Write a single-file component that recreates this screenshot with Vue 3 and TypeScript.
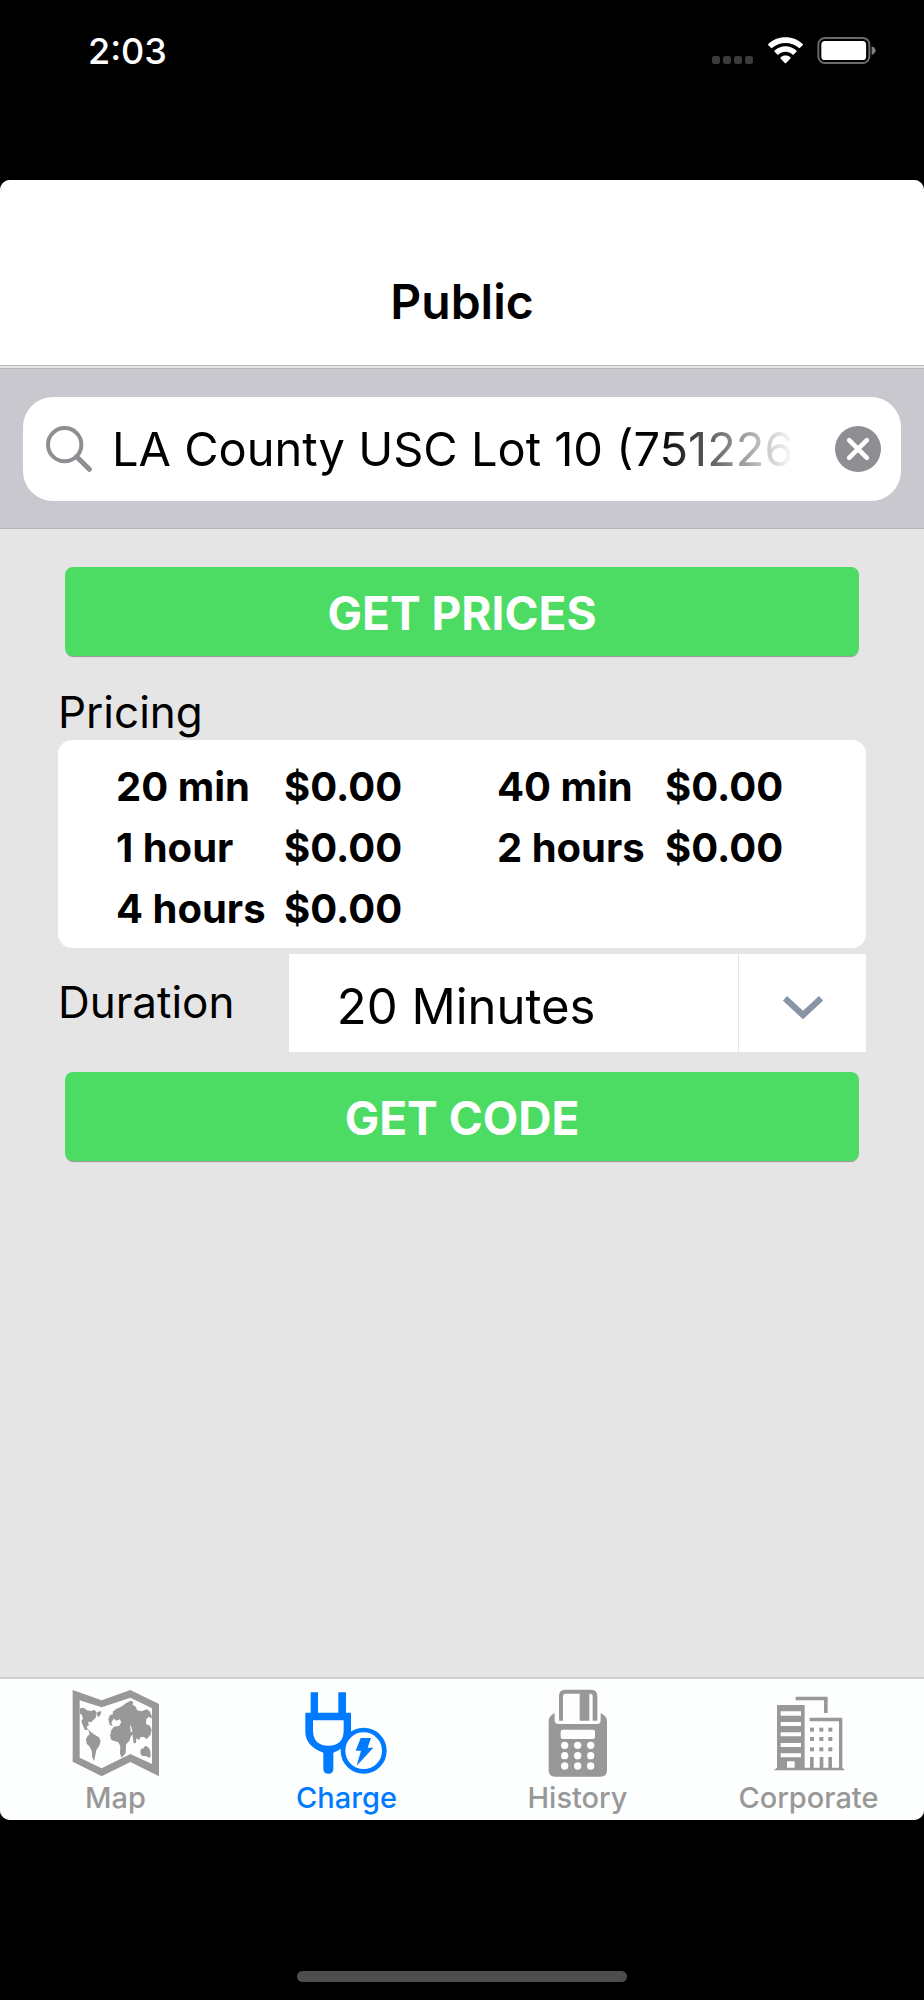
<script setup lang="ts">
import { ref } from 'vue'

type TabId = 'map' | 'charge' | 'history' | 'corporate'

interface Tab {
  id: TabId
  label: string
  viewBox: string
}

interface Price {
  span: string
  amount: string
}

const tabs: Tab[] = [
  { id: 'map', label: 'Map', viewBox: '-13 55 420 270' },
  { id: 'charge', label: 'Charge', viewBox: '-10 55 420 270' },
  { id: 'history', label: 'History', viewBox: '-7 55 420 270' },
  { id: 'corporate', label: 'Corporate', viewBox: '43 55 420 270' },
]

const priceRows: Price[][] = [
  [
    { span: '20 min', amount: '$0.00' },
    { span: '40 min', amount: '$0.00' },
  ],
  [
    { span: '1 hour', amount: '$0.00' },
    { span: '2 hours', amount: '$0.00' },
  ],
  [{ span: '4 hours', amount: '$0.00' }],
]

const durations: string[] = ['20 Minutes', '40 Minutes', '1 Hour', '2 Hours', '4 Hours']

const activeTab = ref<TabId>('charge')
const query = ref<string>('LA County USC Lot 10 (751226)')
const duration = ref<string>('20 Minutes')
</script>

<template>
  <div class="screen">
    <header class="status">
      <time class="clock">2:03</time>
      <div class="indicators">
        <svg class="signal" viewBox="0 0 42 8" aria-hidden="true">
          <rect v-for="n in 4" :key="n" :x="(n - 1) * 11" y="0" width="8" height="8" rx="2.5" />
        </svg>
        <svg class="wifi" viewBox="0 0 106 80" aria-hidden="true">
          <path d="M53 0C32 0 14 8 1 20Q-1 22 1 24L9 32Q11 34 13 32C24 22 38 17 53 17S82 22 93 32Q95 34 97 32L105 24Q107 22 105 20C92 8 74 0 53 0Z" />
          <path d="M53 27C40 27 29 32 20 40Q18 42 20 44L28 52Q30 54 32 52C38 47 45 44 53 44S68 47 74 52Q76 54 78 52L86 44Q88 42 86 40C77 32 66 27 53 27Z" />
          <path d="M53 55C47 55 42 57 38 61Q37 63 38 64L51 78Q53 80 55 78L68 64Q69 63 68 61C64 57 59 55 53 55Z" />
        </svg>
        <svg class="battery" viewBox="0 0 177 82" aria-hidden="true">
          <rect x="3" y="3" width="155" height="76" rx="20" fill="none" stroke="#6b6b6b" stroke-width="6" />
          <rect x="12" y="12" width="136" height="58" rx="11" fill="#fff" />
          <path d="M165 28C174 32 177 37 177 41S174 51 165 55Z" fill="#808080" />
        </svg>
      </div>
    </header>

    <div class="sheet">
      <div class="titlebar">
        <h1>Public</h1>
      </div>

      <form class="searchbar" role="search" @submit.prevent>
        <div class="field">
          <svg class="magnifier" viewBox="0 0 138 138" aria-hidden="true">
            <circle cx="56" cy="56" r="50" fill="none" stroke="#8e8e93" stroke-width="12" />
            <path d="M92 92L130 130" stroke="#8e8e93" stroke-width="15" stroke-linecap="round" />
          </svg>
          <input v-model="query" type="text" aria-label="Search locations" />
          <button type="button" class="clear" aria-label="Clear search" @click="query = ''">
            <svg viewBox="0 0 140 140" aria-hidden="true">
              <circle cx="70" cy="70" r="70" fill="#8e8e93" />
              <path d="M43 43L97 97M97 43L43 97" stroke="#fff" stroke-width="14" stroke-linecap="round" />
            </svg>
          </button>
        </div>
      </form>

      <main class="content">
        <button type="button" class="action">GET PRICES</button>

        <h2 id="pricing-title">Pricing</h2>
        <div class="card">
          <table aria-labelledby="pricing-title">
            <tbody>
              <tr v-for="(row, r) in priceRows" :key="r">
                <template v-for="price in row" :key="price.span">
                  <th scope="row">{{ price.span }}</th>
                  <td>{{ price.amount }}</td>
                </template>
              </tr>
            </tbody>
          </table>
        </div>

        <div class="duration">
          <label for="duration">Duration</label>
          <div class="picker">
            <select id="duration" v-model="duration">
              <option v-for="item in durations" :key="item" :value="item">{{ item }}</option>
            </select>
            <span class="arrow" aria-hidden="true">
              <svg viewBox="0 0 120 70">
                <path d="M5 7L60 58L115 7" fill="none" stroke="#8795a5" stroke-width="19" />
              </svg>
            </span>
          </div>
        </div>

        <button type="button" class="action">GET CODE</button>
      </main>

      <nav class="tabs" aria-label="Main">
        <a
          v-for="tab in tabs"
          :key="tab.id"
          :href="`#${tab.id}`"
          :class="{ active: tab.id === activeTab }"
          @click.prevent="activeTab = tab.id"
        >
          <svg class="glyph" :viewBox="tab.viewBox" aria-hidden="true">
            <g v-if="tab.id === 'map'">
              <path fill-rule="evenodd" d="M67 61L154 92L240 61L326 103V320L240 277L154 320L67 276ZM88 92V264L154 296L240 253L305 283V116L240 84L154 113Z" />
              <path d="M89 116L101 114L110 122L123 124L133 120L139 129L137 143L127 153L121 158L113 156L116 166L109 171L113 181L103 180L97 166L93 153L98 147L94 135L88 131Z" />
              <path d="M141 127L153 124L151 134L145 143L140 136Z" />
              <path d="M113 178L122 188L133 195L146 203L151 213L147 228L138 241L135 257L131 274L126 264L124 243L117 230L109 222L107 208L112 199L118 194Z" />
              <path d="M174 149L179 136L188 134L187 126L199 117L215 110L229 99L241 93L249 96L247 105L257 112L260 122L274 125L289 119L298 125L304 138V147L296 141L288 148L287 163L299 168L304 181L300 197L289 208L281 202L271 202L266 211L258 206L257 220L250 221L248 207L246 187L243 171L239 167L241 186L250 189L241 201L237 214L227 224L226 251L214 264L209 252L210 229L204 218L194 215L183 211L179 198L183 181L191 171L207 168L213 157L208 149L199 153L190 147L183 159L187 168L178 166Z" />
              <path d="M271 239L279 236L284 229L292 231L299 240L301 258L297 265L289 260L275 259L270 251Z" />
            </g>
            <g v-else-if="tab.id === 'charge'">
              <path fill-rule="evenodd" d="M91 68H113V129H174V68H197V129H212V187Q210 226 172 243L159 249V297Q159 312 144 312Q129 312 129 297V249L115 243Q75 223 75 186V129H91ZM98 152V184Q99 228 144 228Q189 228 190 184V152Z" />
              <circle cx="250" cy="243" r="62" fill="#fff" stroke="currentColor" stroke-width="14" />
              <path d="M241 205H272L262 234H279L229 288L242 243H226Z" />
            </g>
            <g v-else-if="tab.id === 'history'">
              <path fill-rule="evenodd" d="M146 153V79Q146 60 165 60H242Q261 60 261 79V153H247V80Q247 74 242 72H237V153H208V72H166Q158 72 158 81V153Z" />
              <path fill-rule="evenodd" d="M133 130V152Q133 163 145 163H260Q271 163 271 152V130Q290 139 290 155V302Q290 321 271 321H134Q115 321 115 302V155Q115 139 133 130ZM157 180Q151 180 151 186V202Q151 208 157 208H248Q254 208 254 202V186Q254 180 248 180Z" />
              <g fill="#fff">
                <template v-for="y in [227, 258, 289]" :key="y">
                  <circle v-for="x in [163, 202, 241]" :key="x" :cx="x" :cy="y" r="11" />
                </template>
              </g>
            </g>
            <g v-else>
              <path d="M213 81H309V130H298V92H213Z" />
              <path fill-rule="evenodd" d="M157 106H240V294H256V262H267V294H285V262H296V294H311V262H322V294H343V155H255V144H353V294L361 302H147L157 294ZM168 125V138H229V125ZM168 157V169H229V157ZM168 188V200H229V188ZM168 220V232H229V220ZM168 251V263H229V251ZM187 275V294H210V275Z" />
              <template v-for="y in [174, 202, 233]" :key="y">
                <rect v-for="x in [256, 284, 311]" :key="x" :x="x" :y="y" width="12" height="12" />
              </template>
            </g>
          </svg>
          <span>{{ tab.label }}</span>
        </a>
      </nav>
    </div>

    <footer class="home">
      <span class="home-bar"></span>
    </footer>
  </div>
</template>

<style>
body {
  margin: 0;
  background: #000;
}
</style>

<style scoped>
.screen {
  display: flex;
  flex-direction: column;
  min-height: 100vh;
  background: #000;
  color: #000;
  font-family: Inter, "Liberation Sans", sans-serif;
}

.screen *,
.screen {
  box-sizing: border-box;
}

button,
input,
select {
  margin: 0;
  padding: 0;
  border: 0;
  font-family: inherit;
  color: inherit;
}

svg {
  display: block;
}

.status {
  display: flex;
  justify-content: space-between;
  align-items: flex-start;
  height: 180px;
  padding: 29px 48px 0 88px;
  color: #fff;
}

.clock {
  font-size: 36px;
  line-height: 44px;
  font-weight: 500;
}

.indicators {
  display: flex;
  align-items: center;
  gap: 14px;
  padding-top: 8px;
}

.signal {
  width: 42px;
  height: 8px;
  margin-top: 18px;
  fill: #3b3b3b;
}

.wifi {
  width: 35px;
  height: 27px;
  fill: #fff;
}

.battery {
  width: 59px;
  height: 27px;
}

.sheet {
  display: flex;
  flex: 1;
  flex-direction: column;
  overflow: hidden;
  border-radius: 10px;
  background: #e5e5e5;
}

.titlebar {
  height: 186px;
  padding-top: 92px;
  border-bottom: 1px solid #b9b9bb;
  background: #fff;
  text-align: center;
}

h1 {
  margin: 0;
  font-size: 48px;
  line-height: 60px;
  font-weight: 600;
}

.searchbar {
  margin-top: 2px;
  padding: 28px 23px 27px;
  border-top: 1px solid #b6b5ba;
  border-bottom: 1px solid #b6b5ba;
  background: #c9c8ce;
}

.field {
  display: flex;
  align-items: center;
  height: 104px;
  padding: 0 20px 0 23px;
  border-radius: 30px;
  background: #fff;
}

.magnifier {
  flex: none;
  width: 46px;
  height: 46px;
}

.field input {
  flex: 1;
  min-width: 0;
  height: 60px;
  margin: 0 36px 0 20px;
  padding-bottom: 2px;
  outline: 0;
  background: none;
  font-size: 47px;
  line-height: 58px;
  mask-image: linear-gradient(to right, #000 calc(100% - 140px), transparent calc(100% - 4px));
}

.clear {
  flex: none;
  width: 46px;
  height: 46px;
  background: none;
}

.content {
  flex: 1;
  padding: 38px 58px;
}

.action {
  display: block;
  width: calc(100% - 14px);
  height: 89px;
  margin: 0 7px;
  padding-top: 2px;
  border-radius: 8px;
  background: #4cdc64;
  box-shadow: 0 2px 1px -1px rgba(0, 0, 0, 0.35);
  color: #fff;
  font-size: 46px;
  line-height: 56px;
  font-weight: 700;
}

h2,
.duration label {
  font-size: 44px;
  line-height: 56px;
  font-weight: 400;
}

h2 {
  margin: 28px 0 0;
}

.card {
  padding: 16px 0 9px 58px;
  border-radius: 14px;
  background: #fff;
}

table {
  width: 100%;
  table-layout: fixed;
  border-collapse: collapse;
  font-size: 40px;
  line-height: 61px;
}

th,
td {
  padding: 0;
  text-align: left;
  font-weight: 700;
  white-space: nowrap;
}

th {
  width: 168px;
}

td:nth-child(2) {
  width: 213px;
}

.duration {
  display: flex;
  margin: 6px 0 20px;
}

.duration label {
  flex: 2;
  padding-top: 20px;
}

.picker {
  display: grid;
  flex: 5;
  grid-template-columns: 1fr 128px;
  height: 98px;
  background: #fff;
}

.picker select {
  grid-area: 1 / 1 / 2 / 3;
  min-width: 0;
  padding: 8px 128px 0 48px;
  appearance: none;
  background: none;
  font-size: 49px;
  line-height: 62px;
  font-weight: 400;
}

.arrow {
  display: grid;
  grid-area: 1 / 2 / 2 / 3;
  place-items: center;
  padding-top: 8px;
  border-left: 1px solid #e5e5e5;
  pointer-events: none;
}

.arrow svg {
  width: 40px;
  height: 23px;
}

.tabs {
  display: grid;
  grid-template-columns: repeat(4, 1fr);
  padding: 9px 0 5px;
  border-top: 2px solid #cfcfcf;
  background: #fdfefe;
}

.tabs a {
  display: flex;
  flex-direction: column;
  align-items: center;
  gap: 3px;
  color: #989898;
  font-size: 29px;
  line-height: 34px;
  font-weight: 500;
  text-decoration: none;
}

.tabs a.active {
  color: #007aff;
}

.glyph {
  width: 140px;
  height: 90px;
  fill: currentColor;
}

.home {
  display: flex;
  justify-content: center;
  align-items: flex-end;
  height: 180px;
  padding-bottom: 18px;
}

.home-bar {
  width: 330px;
  height: 11px;
  border-radius: 6px;
  background: #4d4d4d;
}
</style>
